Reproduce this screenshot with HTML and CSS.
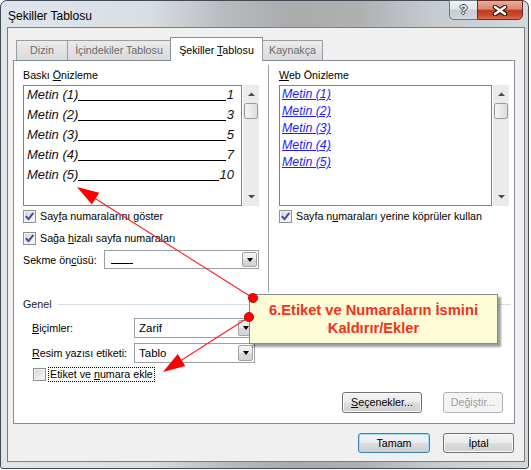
FILE: index.html
```html
<!DOCTYPE html>
<html lang="tr">
<head>
<meta charset="utf-8">
<title>Şekiller Tablosu</title>
<link rel="stylesheet" href="styles.css">
</head>
<body>
<div class="window">
  <div class="titlebar">
    <span class="title">Şekiller Tablosu</span>
    <div class="capbtns">
      <div class="cap help"><span>?</span></div>
      <div class="cap close">
        <svg width="16" height="11" viewBox="0 0 16 11"><path class="xo" d="M3 2 L13 9 M13 2 L3 9"/><path class="xi" d="M3 2 L13 9 M13 2 L3 9"/></svg>
      </div>
    </div>
  </div>
  <div class="client">
    <div class="tabs">
      <div class="tab t1">Dizin</div>
      <div class="tab t2">İçindekiler Tablosu</div>
      <div class="tab t3 active">Şekiller <u>T</u>ablosu</div>
      <div class="tab t4">Kaynakça</div>
    </div>
    <div class="panel">
      <div class="top">
        <div class="col colL">
          <div class="lbl">Baskı <u>Ö</u>nizleme</div>
          <div class="preview">
            <div class="pbox">
              <div class="prow"><span class="pt">Metin (1)</span><span class="lead"></span><span class="pn">1</span></div>
              <div class="prow"><span class="pt">Metin (2)</span><span class="lead"></span><span class="pn">3</span></div>
              <div class="prow"><span class="pt">Metin (3)</span><span class="lead"></span><span class="pn">5</span></div>
              <div class="prow"><span class="pt">Metin (4)</span><span class="lead"></span><span class="pn">7</span></div>
              <div class="prow"><span class="pt">Metin (5)</span><span class="lead"></span><span class="pn">10</span></div>
            </div>
            <svg class="sbar" width="16" height="121" viewBox="0 0 16 121">
              <defs><linearGradient id="th" x1="0" x2="1" y1="0" y2="0"><stop offset="0" stop-color="#f6f6f6"/><stop offset="1" stop-color="#dcdcdc"/></linearGradient></defs>
              <rect width="16" height="121" fill="#ebebeb"/>
              <path d="M5 11 L8.5 7.5 L12 11 Z" fill="#4a4a4a"/>
              <rect x="1.5" y="18.5" width="13" height="15" rx="2" fill="url(#th)" stroke="#979797"/>
              <path d="M5 110 L12 110 L8.5 113.5 Z" fill="#4a4a4a"/>
            </svg>
          </div>
          <div class="chk"><span class="cb"><svg width="11" height="11" viewBox="0 0 11 11"><path d="M2.2 5.6 L4.5 8.2 L9 2.4" class="tick"/></svg></span><span>Say<u>f</u>a numaralarını göster</span></div>
          <div class="chk second"><span class="cb"><svg width="11" height="11" viewBox="0 0 11 11"><path d="M2.2 5.6 L4.5 8.2 L9 2.4" class="tick"/></svg></span><span>Sağa <u>h</u>izalı sayfa numaraları</span></div>
          <div class="field">
            <span class="flbl">Sekme ön<u>c</u>üsü:</span>
            <div class="combo sekme"><span class="dash"></span><span class="dd"></span></div>
          </div>
        </div>
        <div class="col colR">
          <div class="lbl"><u>W</u>eb Önizleme</div>
          <div class="preview">
            <div class="pbox wbox">
              <div class="wrow"><span class="wl">Metin (1)</span></div>
              <div class="wrow"><span class="wl">Metin (2)</span></div>
              <div class="wrow"><span class="wl">Metin (3)</span></div>
              <div class="wrow"><span class="wl">Metin (4)</span></div>
              <div class="wrow"><span class="wl">Metin (5)</span></div>
            </div>
            <svg class="sbar" width="16" height="121" viewBox="0 0 16 121">
              <defs><linearGradient id="th2" x1="0" x2="1" y1="0" y2="0"><stop offset="0" stop-color="#f6f6f6"/><stop offset="1" stop-color="#dcdcdc"/></linearGradient></defs>
              <rect width="16" height="121" fill="#ebebeb"/>
              <path d="M5 11 L8.5 7.5 L12 11 Z" fill="#4a4a4a"/>
              <rect x="1.5" y="18.5" width="13" height="15" rx="2" fill="url(#th2)" stroke="#979797"/>
              <path d="M5 110 L12 110 L8.5 113.5 Z" fill="#4a4a4a"/>
            </svg>
          </div>
          <div class="chk"><span class="cb"><svg width="11" height="11" viewBox="0 0 11 11"><path d="M2.2 5.6 L4.5 8.2 L9 2.4" class="tick"/></svg></span><span>Sayfa n<u>u</u>maraları yerine köprüler kullan</span></div>
        </div>
      </div>
      <div class="genel">
        <div class="glbl"><span>Genel</span><span class="gline"></span></div>
        <div class="grow first">
          <span class="rlbl"><u>B</u>içimler:</span>
          <div class="combo gcombo"><span class="cval">Zarif</span><span class="dd"></span></div>
        </div>
        <div class="grow">
          <span class="rlbl"><u>R</u>esim yazısı etiketi:</span>
          <div class="combo gcombo"><span class="cval">Tablo</span><span class="dd"></span></div>
        </div>
        <div class="chk2"><span class="cb"></span><span class="focus">Etiket ve <u>n</u>umara ekle</span></div>
      </div>
      <div class="opts">
        <div class="btn wSec"><u>S</u>eçenekler...</div>
        <div class="btn dis wDeg">Değiştir...</div>
      </div>
    </div>
    <div class="footer">
      <div class="btn def wTam">Tamam</div>
      <div class="btn wIpt">İptal</div>
    </div>
  </div>
  <div class="callout">6.Etiket ve Numaraların İsmini<br>Kaldırır/Ekler</div>
  <svg class="anno" width="531" height="470" viewBox="0 0 531 470">
    <line x1="253" y1="298" x2="84" y2="191.5" class="aline"/>
    <polygon points="77,187 91.9,204.6 99.3,192.8" class="ahead"/>
    <line x1="249" y1="317" x2="170" y2="367.5" class="aline"/>
    <polygon points="163,372 185.3,365.9 177.7,354.1" class="ahead"/>
    <circle cx="253" cy="298" r="4.6" class="dot"/>
    <circle cx="249" cy="317" r="4.6" class="dot"/>
  </svg>
</div>
</body>
</html>
```
FILE: styles.css
```css
html, body {
  margin: 0;
  padding: 0;
  background: #ffffff;
}
body {
  font-family: "Liberation Sans", Arial, sans-serif;
  font-size: 10.7px;
  color: #000;
}
u { text-decoration: underline; text-underline-offset: 1px; }

.window {
  position: relative;
  width: 529px;
  height: 469px;
  box-sizing: border-box;
  border: 1px solid #414b55;
  border-radius: 7px 7px 3px 3px;
  background: linear-gradient(90deg, #dfe5eb 0%, #d9dee3 28%, #b9bcbf 42%, #a9abad 55%, #aeb0b2 68%, #c6cbd0 82%, #d3d8dd 100%);
  padding-bottom: 6px;
}

/* title bar */
.titlebar {
  display: flex;
  align-items: flex-start;
  height: 26px;
}
.title {
  margin: 8px 0 0 7px;
  font-size: 12px;
  line-height: 14px;
  color: #000;
}
.capbtns {
  display: flex;
  margin: -1px 5px 0 auto;
}
.cap {
  height: 20px;
  box-sizing: border-box;
  display: flex;
  align-items: center;
  justify-content: center;
}
.help {
  width: 28px;
  border: 1px solid #6c7780;
  border-right: none;
  border-radius: 0 0 0 5px;
  background: linear-gradient(#f1f3f5 0%, #e1e5e9 45%, #c6ccd2 52%, #d2d8de 100%);
}
.help span {
  font-weight: bold;
  font-size: 13px;
  line-height: 14px;
  color: #f4f6f8;
  text-shadow: 1px 0 0 #3b4147, -1px 0 0 #3b4147, 0 1px 0 #3b4147, 0 -1px 0 #3b4147;
}
.close {
  width: 46px;
  border: 1px solid #6a2a1e;
  border-radius: 0 0 5px 0;
  background: linear-gradient(#e9ad9d 0%, #da8672 45%, #c13a21 52%, #c8472a 78%, #df6f49 100%);
}
.close svg { display: block; }
.xo { stroke: #40170f; stroke-width: 4.6; stroke-linecap: round; fill: none; }
.xi { stroke: #ffffff; stroke-width: 2.4; stroke-linecap: round; fill: none; }

/* client */
.client {
  margin: 0 3px 0 6px;
  border: 1px solid #7a7d80;
  background: #f0f0f0;
  padding: 9px 0 8px 0;
}

.tabs {
  display: flex;
  align-items: flex-end;
  height: 24px;
  margin: 0 0 -1px 8px;
  position: relative;
  z-index: 1;
}
.tab {
  box-sizing: border-box;
  height: 20px;
  margin-bottom: 1px;
  border: 1px solid #989ca3;
  border-bottom: none;
  background: linear-gradient(#ebebeb, #dadada);
  color: #6a6a6a;
  text-align: center;
  line-height: 19px;
}
.t1 { width: 52px; }
.t2 { width: 104px; margin-left: -1px; }
.t3 { width: 93px; margin-left: -1px; }
.t4 { width: 61px; margin-left: -1px; }
.tab.active {
  height: 24px;
  margin-bottom: 0;
  background: #ffffff;
  color: #000;
  padding-top: 3px;
  border-color: #898c95;
}

.panel {
  margin: 0 9px 0 5px;
  border: 1px solid #898c95;
  background: #ffffff;
  padding: 4px 0 10px 0;
}

.top {
  display: flex;
  height: 227px;
}
.col { box-sizing: border-box; padding-top: 3px; }
.colL {
  width: 255px;
  padding-left: 9px;
  padding-right: 9px;
  border-right: 1px solid #a0a0a0;
}
.colR {
  width: 245px;
  padding-left: 10px;
  padding-right: 5px;
}
.lbl {
  line-height: 14px;
  height: 14px;
}
.preview {
  display: flex;
  gap: 1px;
  margin-top: 3px;
  height: 121px;
}
.sbar { display: block; flex: none; }
.pbox {
  flex: 1;
  box-sizing: border-box;
  border: 1px solid #828282;
  background: #fff;
  padding: 0 7px 0 3px;
}
.prow {
  display: flex;
  align-items: flex-start;
  height: 20px;
  font-style: italic;
  font-size: 13px;
  line-height: 18px;
  color: #111;
}
.lead {
  flex: 1;
  height: 1px;
  margin-top: 14px;
  background: #000;
}
.pn { padding-left: 1px; }

.wbox { padding: 0 2px; }
.wrow {
  font-style: italic;
  font-size: 12.4px;
  line-height: 17px;
  height: 17px;
}
.wl {
  color: #1e1eff;
  text-decoration: underline;
  text-underline-offset: 1px;
}

.chk {
  display: flex;
  align-items: center;
  gap: 4px;
  height: 13px;
  line-height: 13px;
  margin-top: 4px;
}
.chk.second { margin-top: 9px; }
.cb {
  flex: none;
  width: 13px;
  height: 13px;
  box-sizing: border-box;
  border: 1px solid #8e8f8f;
  background: linear-gradient(135deg, #cdd1d7 0%, #eef0f2 70%, #f8f8f8 100%);
  box-shadow: inset 0 0 0 1px #f4f4f4;
}
.cb svg { display: block; }
.tick { fill: none; stroke: #3c5191; stroke-width: 1.9; stroke-linecap: round; stroke-linejoin: round; }

.field {
  display: flex;
  align-items: center;
  margin-top: 5px;
  height: 19px;
}
.flbl { width: 81px; flex: none; }
.combo {
  display: flex;
  align-items: center;
  box-sizing: border-box;
  border: 1px solid #9a9fa6;
  background: #fff;
  padding: 1px;
}
.sekme {
  width: 155px;
  height: 19px;
}
.dash {
  width: 22px;
  height: 1px;
  background: #000;
  margin: 8px 0 0 5px;
}
.dd {
  margin-left: auto;
  align-self: stretch;
  width: 15px;
  box-sizing: border-box;
  border: 1px solid #a3a3a3;
  border-radius: 2px;
  background: linear-gradient(#f6f6f6 0%, #e9e9e9 50%, #d9d9d9 51%, #d2d2d2 100%);
  display: flex;
  align-items: center;
  justify-content: center;
}
.dd::after {
  content: "";
  width: 0;
  height: 0;
  border-left: 3.5px solid transparent;
  border-right: 3.5px solid transparent;
  border-top: 4px solid #000;
}

/* genel */
.genel { padding-left: 9px; }
.glbl {
  display: flex;
  align-items: center;
  gap: 6px;
  margin-top: 5px;
  height: 14px;
  line-height: 14px;
  color: #1a1a1a;
}
.gline {
  flex: none;
  width: 453px;
  height: 1px;
  background: #d5dfe5;
}
.grow {
  display: flex;
  align-items: center;
  height: 20px;
  margin-top: 5px;
  padding-left: 9px;
}
.grow.first { margin-top: 7px; }
.rlbl { width: 102px; flex: none; }
.gcombo {
  width: 121px;
  height: 20px;
}
.cval { padding-left: 3px; font-size: 11.5px; }
.chk2 {
  display: flex;
  align-items: center;
  gap: 2px;
  height: 15px;
  margin-top: 4px;
  padding-left: 10px;
}
.focus {
  border: 1px dotted #000;
  padding: 0 1px;
  line-height: 13px;
}

/* buttons */
.opts {
  display: flex;
  justify-content: flex-end;
  gap: 21px;
  margin-top: 10px;
  padding-right: 11px;
}
.btn {
  box-sizing: border-box;
  height: 21px;
  border: 1px solid #707070;
  border-radius: 3px;
  background: linear-gradient(#f3f3f3 0%, #ebebeb 48%, #dddddd 52%, #cfcfcf 100%);
  box-shadow: inset 0 0 0 1px #fbfbfb;
  text-align: center;
  line-height: 19px;
  color: #000;
}
.wSec { width: 80px; }
.wDeg { width: 60px; }
.btn.dis {
  border-color: #adb2b5;
  background: #f4f4f4;
  color: #9d9d9d;
  box-shadow: none;
}
.footer {
  display: flex;
  justify-content: flex-end;
  gap: 13px;
  margin-top: 9px;
  padding-right: 10px;
}
.footer .btn { height: 20px; line-height: 18px; }
.wTam { width: 72px; }
.wIpt { width: 71px; }
.btn.def {
  border-color: #3c7fb1;
  box-shadow: inset 0 0 0 1px #9fdff7;
}

/* annotation */
.callout {
  position: absolute;
  left: 248px;
  top: 293px;
  width: 249px;
  height: 50px;
  box-sizing: border-box;
  border: 1px solid #8a8a8a;
  background: #fdfcd6;
  box-shadow: 3px 3px 2px rgba(0, 0, 0, 0.38);
  color: #f2301b;
  font-weight: bold;
  font-size: 14.7px;
  line-height: 18px;
  text-align: center;
  padding-top: 6px;
}
.anno {
  position: absolute;
  left: -1px;
  top: -1px;
  pointer-events: none;
}
.aline { stroke: #ff1e1e; stroke-width: 1.1; }
.ahead { fill: #ff0000; }
.dot { fill: #ff0000; stroke: #b00000; stroke-width: 0.8; }
```
